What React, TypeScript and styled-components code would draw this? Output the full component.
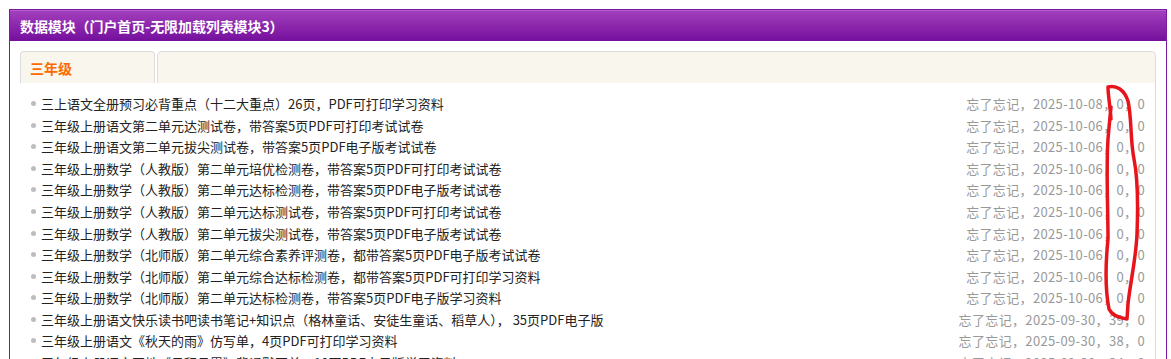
import React from "react";
import styled, { createGlobalStyle } from "styled-components";

const Global = createGlobalStyle`
  html, body { margin: 0; padding: 0; background: #fff; }
  body { font-family: "Noto Sans CJK SC", "Noto Sans", "Liberation Sans", sans-serif; }
  #root { position: relative; }
`;

const Box = styled.div`
  margin: 9px 4px 0 9px;
  border: 1px solid #7a1aa0;
  border-bottom: none;
  background: #fff;
  height: 360px;
  box-sizing: border-box;
`;

const Header = styled.div`
  height: 30px;
  display: flex;
  align-items: center;
  padding: 0 10px;
  background: linear-gradient(to bottom, #a23fbd 0%, #9430b2 30%, #740f9d 100%);
  border-top: 1px solid #b55ccc;
  color: #fff;
  font-weight: bold;
  font-size: 14px;
  letter-spacing: -0.1px;
`;

const Body = styled.div`
  padding: 10px 10px 0 10px;
`;

const TabBar = styled.div`
  display: flex;
  height: 32px;
  gap: 2px;
`;

const Tab = styled.div<{ $active?: boolean }>`
  width: 135px;
  display: flex;
  align-items: center;
  padding-left: 9px;
  box-sizing: border-box;
  border: 1px solid #dcdcdc;
  border-bottom: none;
  border-radius: 4px 4px 0 0;
  background: #f9f6ee;
  color: ${(p) => (p.$active ? "#ff6a00" : "#333")};
  font-weight: bold;
  font-size: 14px;
`;

const TabFill = styled.div`
  flex: 1;
  border: 1px solid #dcdcdc;
  border-bottom: none;
  border-radius: 5px 5px 0 0;
  background: #f9f6ee;
`;

const List = styled.ul`
  list-style: none;
  margin: 0;
  padding: 10px 10px 0 11px;
  border-right: 1px solid #dcdcdc;
`;

const Row = styled.li`
  display: flex;
  align-items: center;
  height: 21.55px;
  font-size: 13px;
  white-space: nowrap;
`;

const Dot = styled.span`
  width: 5px;
  height: 5px;
  border-radius: 50%;
  background: #bdbdbd;
  margin-right: 5px;
  flex: none;
`;

const Title = styled.span`
  flex: 1;
  color: #222;
  overflow: hidden;
`;

const Meta = styled.span`
  color: #999;
  flex: none;
  letter-spacing: 0.35px;
`;

const Scribble = styled.svg`
  position: absolute;
  left: 0;
  top: 0;
  pointer-events: none;
`;

const rows: [string, string][] = [
  ["三上语文全册预习必背重点（十二大重点）26页，PDF可打印学习资料", "忘了忘记，2025-10-08，0，0"],
  ["三年级上册语文第二单元达测试卷，带答案5页PDF可打印考试试卷", "忘了忘记，2025-10-06，0，0"],
  ["三年级上册语文第二单元拔尖测试卷，带答案5页PDF电子版考试试卷", "忘了忘记，2025-10-06，0，0"],
  ["三年级上册数学（人教版）第二单元培优检测卷，带答案5页PDF可打印考试试卷", "忘了忘记，2025-10-06，0，0"],
  ["三年级上册数学（人教版）第二单元达标检测卷，带答案5页PDF电子版考试试卷", "忘了忘记，2025-10-06，0，0"],
  ["三年级上册数学（人教版）第二单元达标测试卷，带答案5页PDF可打印考试试卷", "忘了忘记，2025-10-06，0，0"],
  ["三年级上册数学（人教版）第二单元拔尖测试卷，带答案5页PDF电子版考试试卷", "忘了忘记，2025-10-06，0，0"],
  ["三年级上册数学（北师版）第二单元综合素养评测卷，都带答案5页PDF电子版考试试卷", "忘了忘记，2025-10-06，0，0"],
  ["三年级上册数学（北师版）第二单元综合达标检测卷，都带答案5页PDF可打印学习资料", "忘了忘记，2025-10-06，0，0"],
  ["三年级上册数学（北师版）第二单元达标检测卷，带答案5页PDF电子版学习资料", "忘了忘记，2025-10-06，0，0"],
  ["三年级上册语文快乐读书吧读书笔记+知识点（格林童话、安徒生童话、稻草人）， 35页PDF电子版", "忘了忘记，2025-09-30，39，0"],
  ["三年级上册语文《秋天的雨》仿写单，4页PDF可打印学习资料", "忘了忘记，2025-09-30，38，0"],
  ["三年级上册语文园地《日积月累》背诵默写单，10页PDF电子版学习资料", "忘了忘记，2025-09-30，34，0"],
];

export default function App() {
  return (
    <>
      <Global />
      <Box>
        <Header>数据模块（门户首页-无限加载列表模块3）</Header>
        <Body>
          <TabBar>
            <Tab $active>三年级</Tab>
            <TabFill />
          </TabBar>
          <List>
            {rows.map(([t, m], i) => (
              <Row key={i}>
                <Dot />
                <Title>{t}</Title>
                <Meta>{m}</Meta>
              </Row>
            ))}
          </List>
        </Body>
      </Box>
      <Scribble width="1171" height="359" viewBox="0 0 1171 359">
        <path
          d="M1111,110 C1110,96 1108,86 1108,78 C1116,76 1124,80 1128,92 C1132,110 1130,130 1134,150 C1138,170 1138,200 1137,225 C1136,250 1130,275 1128,295 L1127,310 C1120,309 1112,307 1109,300 C1105,280 1106,250 1108,230 C1108,200 1106,160 1108,130 C1109,118 1110,108 1111,98"
          fill="none"
          stroke="#e8141c"
          strokeWidth="3.5"
          strokeLinecap="round"
          strokeLinejoin="round"
        />
      </Scribble>
    </>
  );
}
